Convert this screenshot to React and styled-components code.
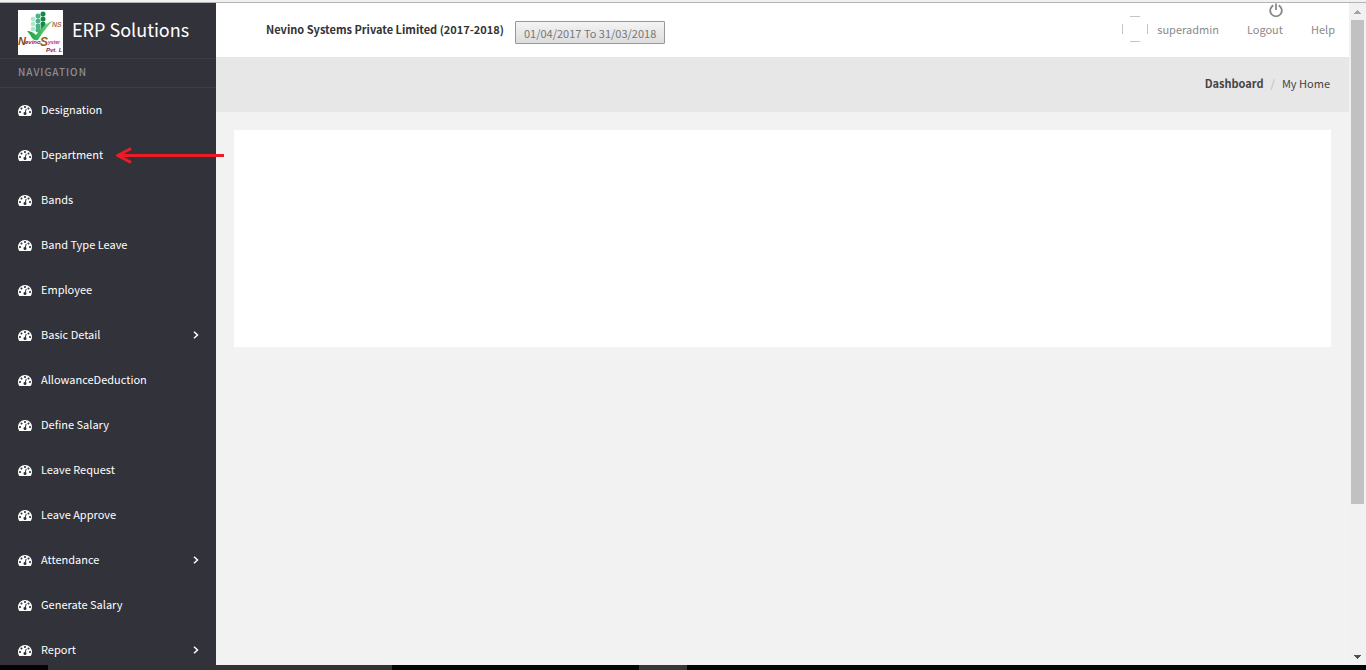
import React from 'react';
import styled, { createGlobalStyle } from 'styled-components';

const menuItems = [
  { label: 'Designation' },
  { label: 'Department', marked: true },
  { label: 'Bands' },
  { label: 'Band Type Leave' },
  { label: 'Employee' },
  { label: 'Basic Detail', hasChildren: true },
  { label: 'AllowanceDeduction' },
  { label: 'Define Salary' },
  { label: 'Leave Request' },
  { label: 'Leave Approve' },
  { label: 'Attendance', hasChildren: true },
  { label: 'Generate Salary' },
  { label: 'Report', hasChildren: true },
];

const App = () => {
  return (
    <>
      <GlobalStyle />
      <Page>
        <TopEdge />
        <Body>
          <Sidebar />
          <Main>
            <Header />
            <Breadcrumb aria-label="Breadcrumb">
              <CurrentCrumb href="#dashboard">Dashboard</CurrentCrumb>
              <Slash>/</Slash>
              <span>My Home</span>
            </Breadcrumb>
            <Content>
              <Panel />
            </Content>
          </Main>
          <ScrollBar />
        </Body>
        <Taskbar>
          <StartArea />
          <SearchArea />
          <ActiveTask />
        </Taskbar>
      </Page>
    </>
  );
};

const Sidebar = () => (
  <Side>
    <Brand href="#home">
      <Logo />
      <BrandName>ERP Solutions</BrandName>
    </Brand>
    <NavHeading>NAVIGATION</NavHeading>
    <nav>
      <Menu>
        {menuItems.map((item) => (
          <MenuRow key={item.label}>
            <MenuLink href={`#${item.label}`}>
              <DashboardIcon />
              <MenuLabel>{item.label}</MenuLabel>
              {item.hasChildren && <Chevron />}
            </MenuLink>
            {item.marked && <Arrow />}
          </MenuRow>
        ))}
      </Menu>
    </nav>
  </Side>
);

const Header = () => (
  <HeaderBar>
    <Company>Nevino Systems Private Limited (2017-2018)</Company>
    <PeriodButton type="button">01/04/2017 To 31/03/2018</PeriodButton>
    <UserMenu>
      <UserLink href="#profile">
        <Avatar />
        superadmin
      </UserLink>
      <LogoutLink href="#logout">
        <PowerIcon />
        Logout
      </LogoutLink>
      <UserLink href="#help">Help</UserLink>
    </UserMenu>
  </HeaderBar>
);

const ScrollBar = () => (
  <Track>
    <ScrollButton type="button" aria-label="Scroll up">
      <svg width="7" height="4" viewBox="0 0 7 4" shapeRendering="crispEdges"><path d="M0 4L3.5 0L7 4Z" fill="#a3a3a3" /></svg>
    </ScrollButton>
    <ThumbArea>
      <Thumb />
    </ThumbArea>
    <ScrollButton type="button" aria-label="Scroll down">
      <svg width="7" height="4" viewBox="0 0 7 4" shapeRendering="crispEdges"><path d="M0 0L3.5 4L7 0Z" fill="#505050" /></svg>
    </ScrollButton>
  </Track>
);

const Logo = () => (
  <svg width="45" height="45" viewBox="0 0 45 45" aria-hidden="true">
    <defs>
      <linearGradient id="check" x1="0" y1="0" x2="1" y2="0">
        <stop offset="0" stopColor="#1fa045" />
        <stop offset="0.45" stopColor="#3dba5a" />
        <stop offset="1" stopColor="#8fdb9b" />
      </linearGradient>
    </defs>
    <rect width="45" height="45" fill="#fff" />
    <g fill="#a9e9cc">
      <circle cx="15" cy="9" r="2.3" />
      <circle cx="15" cy="14" r="2.3" />
      <circle cx="15" cy="19" r="2.3" />
    </g>
    <g fill="#46b583">
      <circle cx="20" cy="6" r="2.5" />
      <circle cx="20" cy="11" r="2.5" />
      <circle cx="20" cy="16" r="2.5" />
      <circle cx="20" cy="20" r="2.5" />
    </g>
    <g fill="#12894b">
      <circle cx="25" cy="4" r="2.5" />
      <circle cx="25" cy="9" r="2.5" />
      <circle cx="25" cy="14" r="2.5" />
      <circle cx="25" cy="18" r="2.5" />
    </g>
    <path d="M9 21Q14 21 18 25Q24 15 36 10Q27 18 20 30Q16 31 14 28Q12 24 9 21Z" fill="url(#check)" />
    <g fontFamily="'Liberation Sans', sans-serif" fontStyle="italic" fontWeight="bold">
      <text x="34" y="17" fontSize="7" fill="#b2714a">NS</text>
      <text x="0" y="35" fontSize="11" fill="#8a4a21">N</text>
      <text x="7" y="34" fontSize="6" fill="#8c1d4b">evino</text>
      <text x="22" y="36" fontSize="12" fill="#9a5a1e">S</text>
      <text x="30" y="34" fontSize="5" fill="#c22e7c">yster</text>
      <text x="28" y="42" fontSize="6" fill="#7d1a4c">Pvt. L</text>
    </g>
  </svg>
);

const DashboardIcon = () => (
  <svg width="14" height="14" viewBox="0 0 1792 1792" fill="currentColor" aria-hidden="true">
    <path d="M384 1152q0-53-37.5-90.5t-90.5-37.5-90.5 37.5-37.5 90.5 37.5 90.5 90.5 37.5 90.5-37.5 37.5-90.5zm192-448q0-53-37.5-90.5t-90.5-37.5-90.5 37.5-37.5 90.5 37.5 90.5 90.5 37.5 90.5-37.5 37.5-90.5zm428 481l101-382q6-26-7.5-48.5t-38.5-29.5-48 6.5-30 39.5l-101 382q-60 5-107 43.5t-63 98.5q-20 77 20 146t117 89 146-20 89-117q16-60-6-117t-72-91zm660-33q0-53-37.5-90.5t-90.5-37.5-90.5 37.5-37.5 90.5 37.5 90.5 90.5 37.5 90.5-37.5 37.5-90.5zm-640-640q0-53-37.5-90.5t-90.5-37.5-90.5 37.5-37.5 90.5 37.5 90.5 90.5 37.5 90.5-37.5 37.5-90.5zm448 192q0-53-37.5-90.5t-90.5-37.5-90.5 37.5-37.5 90.5 37.5 90.5 90.5 37.5 90.5-37.5 37.5-90.5zm320 448q0 261-141 483-19 29-54 29h-1402q-35 0-54-29-141-221-141-483 0-182 71-348t191-286 286-191 348-71 348 71 286 191 191 286 71 348z" />
  </svg>
);

const Chevron = () => (
  <svg width="6" height="8" viewBox="0 0 6 8" fill="none" stroke="#fff" strokeWidth="1.5" aria-hidden="true">
    <path d="M1 0.7L4.5 4L1 7.3" />
  </svg>
);

const PowerIcon = () => (
  <PowerSvg width="14" height="15" viewBox="0 0 14 15" fill="none" stroke="#8a8a8a" strokeWidth="1.8" aria-hidden="true">
    <path d="M4.3 2.4A5.8 5.8 0 1 0 9.7 2.4M7 0.5V7" />
  </PowerSvg>
);

const Avatar = () => (
  <svg width="26" height="26" viewBox="0 0 26 26" fill="none" stroke="#c4c4c4" aria-hidden="true">
    <path d="M8 0.5H18M8 25.5H18M0.5 8V18M25.5 8V18" />
  </svg>
);

const Arrow = () => (
  <ArrowSvg width="108" height="17" viewBox="0 0 108 17" fill="none" stroke="#ed1c24" strokeWidth="3" aria-hidden="true">
    <path d="M2 8.5H108M15 1.5L2 8.5L15 15.5" />
  </ArrowSvg>
);

export default App;

const GlobalStyle = createGlobalStyle`
  * {
    box-sizing: border-box;
  }
  body {
    margin: 0;
    font-family: 'Noto Sans CJK SC', 'Open Sans', sans-serif;
    font-size: 11px;
    line-height: 20px;
    color: #444;
  }
  a {
    color: inherit;
    text-decoration: none;
  }
`;

const Page = styled.div`
  height: 100vh;
  display: flex;
  flex-direction: column;
`;

const TopEdge = styled.div`
  flex: none;
  height: 3px;
  background: #f1f1f1;
  border-bottom: 1px solid #b4b4b4;
`;

const Body = styled.div`
  flex: 1;
  min-height: 0;
  display: flex;
  overflow: hidden;
`;

const Side = styled.aside`
  flex: none;
  position: relative;
  z-index: 1;
  width: 216px;
  background: #32323a;
  color: #fff;
`;

const Brand = styled.a`
  display: flex;
  align-items: center;
  gap: 9px;
  height: 56px;
  padding: 4px 18px 0;
  border-bottom: 1px solid #3d3d46;
`;

const BrandName = styled.span`
  font-size: 18px;
  line-height: 24px;
  padding-bottom: 8px;
`;

const NavHeading = styled.div`
  height: 29px;
  padding: 0 18px;
  border-bottom: 1px solid #3d3d46;
  color: #8f8f94;
  font-size: 10px;
  font-weight: 500;
  line-height: 26px;
  letter-spacing: 1px;
`;

const Menu = styled.ul`
  list-style: none;
  margin: 0;
  padding: 0;
`;

const MenuRow = styled.li`
  position: relative;
`;

const MenuLink = styled.a`
  display: flex;
  align-items: center;
  gap: 9px;
  height: 45px;
  padding: 0 17px 2px 18px;
`;

const MenuLabel = styled.span`
  flex: 1;
  padding-bottom: 2px;
`;

const ArrowSvg = styled.svg`
  position: absolute;
  top: 14px;
  left: 116px;
`;

const Main = styled.main`
  flex: 1;
  min-width: 0;
  background: #f2f2f2;
`;

const HeaderBar = styled.header`
  display: flex;
  align-items: center;
  height: 54px;
  padding: 0 14px 2px 50px;
  background: #fff;
`;

const Company = styled.strong`
  color: #333;
  font-weight: 700;
`;

const PeriodButton = styled.button`
  height: 23px;
  margin: 7px 0 0 11px;
  padding: 0 8px;
  border: 1px solid #979797;
  border-radius: 1px;
  background: linear-gradient(#f4f4f4, #dcdcdc);
  color: #777;
  font: inherit;
  line-height: 20px;
`;

const UserMenu = styled.nav`
  display: flex;
  align-items: center;
  gap: 28px;
  margin-left: auto;
  color: #8a8a8a;
`;

const UserLink = styled.a`
  display: flex;
  align-items: center;
  gap: 9px;
`;

const LogoutLink = styled(UserLink)`
  position: relative;
`;

const PowerSvg = styled.svg`
  position: absolute;
  right: 0;
  bottom: 21px;
`;

const Breadcrumb = styled.nav`
  display: flex;
  align-items: center;
  justify-content: flex-end;
  gap: 7px;
  height: 55px;
  padding: 0 19px 4px;
  background: #e7e7e7;
`;

const CurrentCrumb = styled.a`
  font-weight: 700;
`;

const Slash = styled.span`
  color: #bbb;
`;

const Content = styled.div`
  padding: 18px;
`;

const Panel = styled.section`
  min-height: 217px;
  background: #fff;
`;

const Track = styled.div`
  flex: none;
  display: flex;
  flex-direction: column;
  width: 17px;
  background: #f1f1f1;
`;

const ScrollButton = styled.button`
  display: flex;
  align-items: center;
  justify-content: center;
  height: 17px;
  padding: 0;
  border: 0;
  background: none;
`;

const ThumbArea = styled.div`
  flex: 1;
  padding: 0 2px;
`;

const Thumb = styled.div`
  height: 77%;
  background: #c1c1c1;
`;

const Taskbar = styled.footer`
  flex: none;
  display: flex;
  height: 5px;
  background: #050304;
`;

const StartArea = styled.div`
  width: 48px;
`;

const SearchArea = styled.div`
  width: 344px;
  background: #333;
`;

const ActiveTask = styled.div`
  width: 48px;
  margin-left: 247px;
  background: #3a3536;
`;
